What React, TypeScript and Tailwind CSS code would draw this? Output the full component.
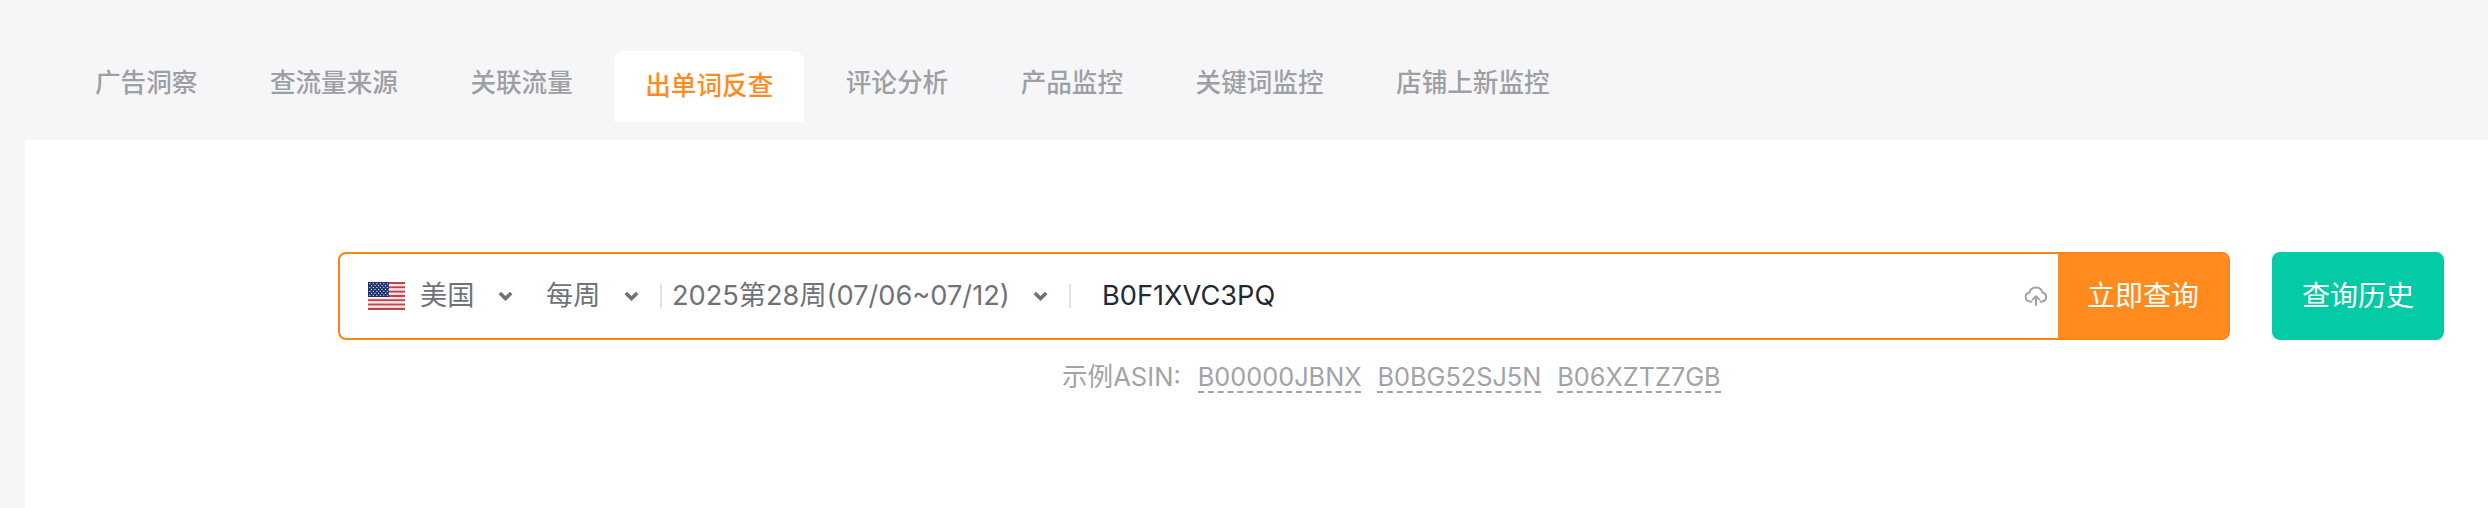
import React from "react";

const font = { fontFamily: '"Inter","Noto Sans CJK SC",sans-serif' };

function Chevron({ className = "" }: { className?: string }) {
  return (
    <svg width="15" height="10" viewBox="0 0 15 10" className={className} fill="none">
      <path d="M1.8 2 L7.5 7.6 L13.2 2" stroke="#6f7277" strokeWidth="3.6" strokeLinejoin="miter" />
    </svg>
  );
}

function Flag() {
  const stripes = Array.from({ length: 13 });
  const stars: [number, number][] = [];
  for (let r = 0; r < 7; r++) for (let c = 0; c < 6; c++) stars.push([1.8 + c * 3.5 + (r % 2 ? 1.7 : 0), 1.6 + r * 1.95]);
  return (
    <svg width="37" height="28" viewBox="0 0 37 28" className="shrink-0" shapeRendering="auto">
      {stripes.map((_, i) => (
        <rect key={i} x="0" y={(i * 28) / 13} width="37" height={28 / 13} fill={i % 2 ? "#f7e9e9" : "#c6404e"} />
      ))}
      <rect x="0" y="0" width="21" height="15" fill="#1f2f6b" />
      {stars.map(([x, y], i) => (
        <rect key={i} x={x - 0.55} y={y - 0.55} width="1.1" height="1.1" fill="#e9ecf5" />
      ))}
    </svg>
  );
}

function Cloud() {
  return (
    <svg width="24" height="20" viewBox="0 0 24 20" fill="none" stroke="#a0a3a8" strokeWidth="2" strokeLinecap="round" strokeLinejoin="round">
      <path d="M7.5 15.5 H6 a4.6 4.6 0 0 1 -0.6 -9.1 A6.8 6.8 0 0 1 18.4 6.4 a4.6 4.6 0 0 1 -0.4 9.1 H16.5" />
      <path d="M12 19 V10.5 M8.8 13.4 L12 10.3 L15.2 13.4" />
    </svg>
  );
}

const tabs = ["广告洞察", "查流量来源", "关联流量", "出单词反查", "评论分析", "产品监控", "关键词监控", "店铺上新监控"];

export default function App() {
  return (
    <div style={font} className="h-[508px] w-full overflow-hidden bg-[#f6f6f8] pt-[51px]">
      <div className="flex h-[71px] gap-[10.5px] pl-[64px]">
        {tabs.map((t, i) =>
          i === 3 ? (
            <div key={t} className="flex w-[190px] items-center justify-center rounded-t-[10px] bg-white text-[25.6px] font-medium text-[#ff8b1f]">
              {t}
            </div>
          ) : (
            <div key={t} className="flex items-center px-[31px] pb-[6px] text-[25.6px] font-medium text-[#9d9fa4]">
              {t}
            </div>
          )
        )}
      </div>
      <div className="ml-[25px] mt-[18px] h-[368px] bg-white pl-[313px] pt-[112px]">
        <div className="flex items-stretch">
          <div className="flex h-[88px] w-[1892px] items-stretch overflow-hidden rounded-[8px] border-2 border-[#f98316]">
            <div className="flex min-w-0 flex-1 items-center pl-[28px] text-[27.2px] text-[#6f7277]">
              <Flag />
              <span className="ml-[15px] w-[54px] whitespace-nowrap">美国</span>
              <Chevron className="ml-[24px]" />
              <span className="ml-[33px] w-[54px] whitespace-nowrap">每周</span>
              <Chevron className="ml-[24px]" />
              <span className="ml-[21px] h-[24px] w-[2px] bg-[#e0e2e6]" />
              <span className="ml-[10px] w-[338px] whitespace-nowrap">2025第28周(07/06~07/12)</span>
              <Chevron className="ml-[23px]" />
              <span className="ml-[21px] h-[24px] w-[2px] bg-[#e0e2e6]" />
              <span className="ml-[31px] whitespace-nowrap text-[#1f2937]">B0F1XVC3PQ</span>
              <span className="ml-auto mr-[10px] flex"><Cloud /></span>
            </div>
            <button className="w-[170px] shrink-0 bg-[#ff8b1f] text-[28px] text-white">立即查询</button>
          </div>
          <button className="ml-[42px] h-[88px] w-[172px] rounded-[8px] bg-[#04caa6] text-[28px] text-white">查询历史</button>
        </div>
        <div className="ml-[724px] mt-[22px] flex items-start text-[25.6px] leading-[29px] text-[#a1a3a8]">
          <span className="whitespace-nowrap">示例ASIN:</span>
          <span className="ml-[17px] whitespace-nowrap border-b-2 border-dashed border-[#a1a3a8] text-[25.3px]">B00000JBNX</span>
          <span className="ml-[16px] whitespace-nowrap border-b-2 border-dashed border-[#a1a3a8] text-[25.3px]">B0BG52SJ5N</span>
          <span className="ml-[16px] whitespace-nowrap border-b-2 border-dashed border-[#a1a3a8] text-[25.3px]">B06XZTZ7GB</span>
        </div>
      </div>
    </div>
  );
}
